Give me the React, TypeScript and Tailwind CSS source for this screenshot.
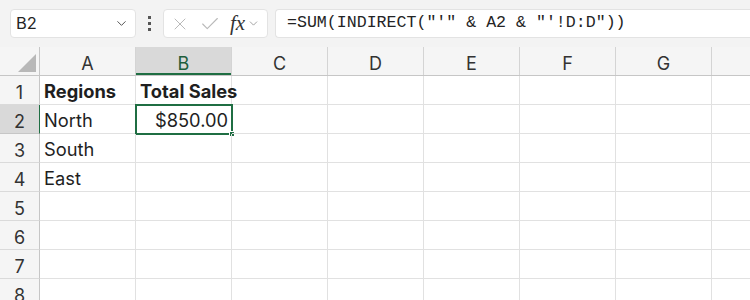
import { ChevronDown, X, Check } from 'lucide-react';

const cols = ['A', 'B', 'C', 'D', 'E', 'F', 'G', ''];
const rows: { n: number; a?: string; b?: string; bold?: boolean }[] = [
  { n: 1, a: 'Regions', b: 'Total Sales', bold: true },
  { n: 2, a: 'North', b: '$850.00' },
  { n: 3, a: 'South' },
  { n: 4, a: 'East' },
  { n: 5 },
  { n: 6 },
  { n: 7 },
  { n: 8 },
];

export default function App() {
  return (
    <div className="w-[750px] h-[300px] overflow-hidden bg-white text-[#1f1f1f]" style={{ fontFamily: 'Inter, "Noto Sans", sans-serif' }}>
      {/* formula bar */}
      <div className="h-[47px] bg-[#f3f3f3] flex items-center pl-[10px]">
        <div className="w-[126px] h-[29px] bg-white border border-[#e3e3e3] rounded-[4px] flex items-center justify-between pl-[5px] pr-[6px]">
          <span className="text-[16.5px] text-[#242424]">B2</span>
          <ChevronDown className="w-[15px] h-[15px] text-[#555]" strokeWidth={1.6} />
        </div>
        <div className="w-[27px] flex flex-col items-center gap-[3px]">
          <span className="w-[3px] h-[3px] bg-[#555]" />
          <span className="w-[3px] h-[3px] bg-[#555]" />
          <span className="w-[3px] h-[3px] bg-[#555]" />
        </div>
        <div className="w-[105px] h-[29px] bg-white border border-[#e3e3e3] rounded-[4px] flex items-center pl-[6px]">
          <X className="w-[20px] h-[20px] text-[#b9b9b9]" strokeWidth={1.2} />
          <Check className="w-[22px] h-[22px] text-[#b9b9b9] ml-[9px]" strokeWidth={1.2} />
          <span className="ml-[9px] text-[21px] italic text-[#333] leading-none" style={{ fontFamily: '"Liberation Serif", serif' }}>fx</span>
          <ChevronDown className="w-[13px] h-[13px] text-[#888] ml-[2px]" strokeWidth={1.4} />
        </div>
        <div className="ml-[7px] flex-1 h-[29px] bg-white border border-[#e3e3e3] border-r-0 rounded-l-[4px] flex items-center pl-[11px]">
          <span className="text-[16.6px] text-[#242424] whitespace-pre" style={{ fontFamily: '"Liberation Mono", monospace' }}>
            =SUM(INDIRECT("'" &amp; A2 &amp; "'!D:D"))
          </span>
        </div>
      </div>

      {/* column headers */}
      <div className="flex h-[29px] bg-[#f5f5f5] border-b border-[#c6c6c6]">
        <div className="w-[40px] shrink-0 border-r border-[#c6c6c6] relative">
          <div className="absolute right-[3px] bottom-[3px] w-0 h-0 border-l-[18px] border-l-transparent border-b-[18px] border-b-[#b8b8b8]" />
        </div>
        {cols.map((c, i) => (
          <div
            key={i}
            className={`w-[96px] shrink-0 border-r border-[#d4d4d4] flex items-center justify-center pt-[4px] text-[18px] ${
              c === 'B' ? 'bg-[#d9d9d9] text-[#1e5e3b] shadow-[inset_0_-2px_0_#1f6e43]' : 'text-[#333]'
            }`}
          >
            {c}
          </div>
        ))}
      </div>

      {/* rows */}
      {rows.map((r) => (
        <div key={r.n} className="flex h-[29px]">
          <div
            className={`w-[40px] shrink-0 border-r border-b flex items-center justify-center pt-[4px] text-[18px] text-[#333] ${
              r.n === 2 ? 'bg-[#d9d9d9] border-r-[#1f6e43] border-b-[#c6c6c6]' : 'bg-[#f5f5f5] border-r-[#c6c6c6] border-b-[#dadada]'
            }`}
          >
            {r.n}
          </div>
          {cols.map((c, i) => (
            <div
              key={i}
              className={`w-[96px] shrink-0 border-r border-b border-[#e1e1e1] flex items-center pt-[4px] text-[18.3px] relative ${
                r.bold ? 'font-bold' : ''
              } ${c === 'B' && r.n === 2 ? 'justify-end pr-[3px]' : 'pl-[4px]'}`}
            >
              <span className="whitespace-nowrap">{c === 'A' ? r.a : c === 'B' ? r.b : ''}</span>
              {c === 'B' && r.n === 2 && (
                <div className="absolute -left-[1px] -top-[1px] w-[98px] h-[31px] border-2 border-[#1f6e43]">
                  <div className="absolute -right-[4px] -bottom-[4px] w-[6px] h-[6px] bg-[#1f6e43] border border-white" />
                </div>
              )}
            </div>
          ))}
        </div>
      ))}
    </div>
  );
}
